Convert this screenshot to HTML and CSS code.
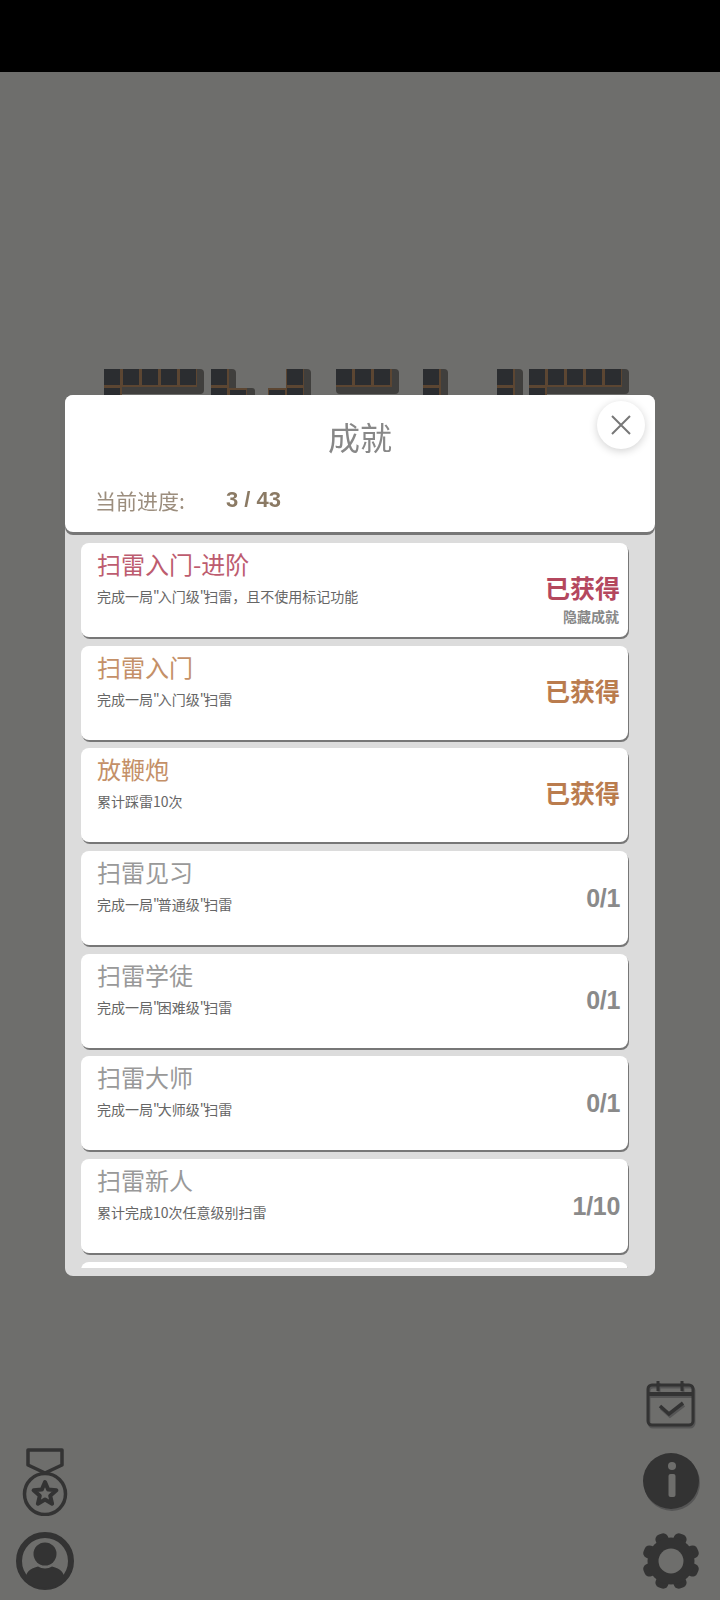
FILE: index.html
```html
<!DOCTYPE html>
<html lang="zh-CN">
<head>
    <meta charset="UTF-8">
    <meta name="viewport" content="width=device-width, initial-scale=1.0">
    <title>成就</title>
    <link rel="stylesheet" href="styles.css">
</head>
<body>
    <div class="page">
        <div class="top-bar"></div>

        <!-- game board behind the dialog, only its top edge shows -->
        <svg class="board" width="720" height="30" viewBox="0 0 720 30">
            <g fill="#403f3d">
                <rect x="104" y="1" width="100" height="25" rx="4"/>
                <rect x="211" y="1" width="25" height="29" rx="4"/>
                <rect x="211" y="20" width="44" height="10" rx="3"/>
                <rect x="286" y="1" width="25" height="29" rx="4"/>
                <rect x="268" y="20" width="43" height="10" rx="3"/>
                <rect x="336" y="1" width="63" height="25" rx="4"/>
                <rect x="423" y="1" width="25" height="29" rx="4"/>
                <rect x="497" y="1" width="26" height="29" rx="4"/>
                <rect x="529" y="1" width="100" height="25" rx="4"/>
            </g>
            <g fill="#5c4632">
                <rect x="104" y="1" width="93" height="18"/>
                <rect x="104" y="19" width="18" height="11"/>
                <rect x="211" y="1" width="18" height="29"/>
                <rect x="229" y="20" width="18" height="10"/>
                <rect x="286" y="1" width="18" height="29"/>
                <rect x="268" y="20" width="18" height="10"/>
                <rect x="336" y="1" width="56" height="18"/>
                <rect x="423" y="1" width="18" height="29"/>
                <rect x="497" y="1" width="18" height="29"/>
                <rect x="529" y="1" width="93" height="18"/>
                <rect x="529" y="19" width="18" height="11"/>
            </g>
            <g fill="#2b2d30">
                <rect x="104" y="1" width="16" height="16"/>
                <rect x="123" y="1" width="16" height="16"/>
                <rect x="142" y="1" width="16" height="16"/>
                <rect x="161" y="1" width="16" height="16"/>
                <rect x="180" y="1" width="16" height="16"/>
                <rect x="104" y="20" width="16" height="10"/>
                <rect x="211" y="1" width="16" height="16"/>
                <rect x="211" y="20" width="16" height="10"/>
                <rect x="230" y="22" width="16" height="8"/>
                <rect x="287" y="1" width="16" height="16"/>
                <rect x="287" y="20" width="16" height="10"/>
                <rect x="269" y="22" width="16" height="8"/>
                <rect x="336" y="1" width="16" height="16"/>
                <rect x="355" y="1" width="16" height="16"/>
                <rect x="374" y="1" width="16" height="16"/>
                <rect x="423" y="1" width="16" height="16"/>
                <rect x="423" y="20" width="16" height="10"/>
                <rect x="497" y="1" width="16" height="16"/>
                <rect x="497" y="20" width="16" height="10"/>
                <rect x="529" y="1" width="16" height="16"/>
                <rect x="548" y="1" width="16" height="16"/>
                <rect x="567" y="1" width="16" height="16"/>
                <rect x="586" y="1" width="16" height="16"/>
                <rect x="605" y="1" width="16" height="16"/>
                <rect x="529" y="20" width="16" height="10"/>
            </g>
        </svg>

        <div class="footer-icons">
            <div class="icon-col">
                <!-- medal -->
                <svg width="58" height="68" viewBox="0 0 58 68" fill="none" stroke="#333" stroke-width="3.5" stroke-linejoin="round">
                    <path d="M12 2H46V17L29 25L12 17Z"/>
                    <circle cx="29" cy="46" r="20.500"/>
                    <path d="M29 34L32.200 41.600L40.400 42.300L34.200 47.700L36.100 55.700L29 51.500L21.900 55.700L23.800 47.700L17.600 42.300L25.800 41.600Z" stroke-width="4"/>
                </svg>
                <!-- profile -->
                <svg width="58" height="58" viewBox="0 0 58 58">
                    <circle cx="29" cy="29" r="26" fill="none" stroke="#333" stroke-width="6"/>
                    <circle cx="29" cy="22" r="11.500" fill="#333"/>
                    <path d="M9 49C10 40 13 37 22 34.500C26 37 32 37 36 34.500C45 37 48 40 49 49C38 58 20 58 9 49Z" fill="#333"/>
                </svg>
            </div>
            <div class="icon-col icon-col-right">
                <!-- calendar -->
                <svg class="icon-shadow" width="58" height="50" viewBox="0 0 58 50" fill="none" stroke="#333" stroke-width="3">
                    <rect x="6" y="5" width="45" height="40" rx="4"/>
                    <path d="M6 14H51" stroke-width="4"/>
                    <path d="M16 1V11M40 1V11"/>
                    <path d="M18 26L27 34L41 23" stroke-width="3.500"/>
                </svg>
                <!-- info -->
                <svg class="icon-shadow" width="58" height="58" viewBox="0 0 58 58">
                    <circle cx="29" cy="29" r="28" fill="#333"/>
                    <circle cx="30" cy="14" r="4" fill="#6e6e6c"/>
                    <rect x="26.500" y="22" width="7" height="23" rx="2" fill="#6e6e6c"/>
                </svg>
                <!-- settings -->
                <svg width="58" height="58" viewBox="0 0 58 58" fill="#333">
                    <g>
                        <rect x="22.500" y="0" width="13" height="58" rx="5" transform="rotate(22.5 29 29)"/>
                        <rect x="22.500" y="0" width="13" height="58" rx="5" transform="rotate(67.5 29 29)"/>
                        <rect x="22.500" y="0" width="13" height="58" rx="5" transform="rotate(112.5 29 29)"/>
                        <rect x="22.500" y="0" width="13" height="58" rx="5" transform="rotate(157.5 29 29)"/>
                    </g>
                    <circle cx="29" cy="29" r="18" fill="none" stroke="#333" stroke-width="11"/>
                    <circle cx="29" cy="29" r="12.500" fill="#6e6e6c"/>
                </svg>
            </div>
        </div>

        <div class="dialog">
            <div class="dialog-head">
                <h1 class="dialog-title">成就</h1>
                <button class="close-btn">
                    <svg width="20" height="20" viewBox="0 0 20 20" stroke="#777" stroke-width="2" fill="none">
                        <path d="M1 1L19 19M19 1L1 19"/>
                    </svg>
                </button>
                <div class="progress">
                    <span class="progress-label">当前进度:</span>
                    <span class="progress-value">3 / 43</span>
                </div>
            </div>
            <div class="dialog-body">
                <div class="list">
                    <div class="card rose">
                        <div class="card-text">
                            <div class="card-title">扫雷入门-进阶</div>
                            <div class="card-desc">完成一局<span class="q">"</span>入门级<span class="q">"</span>扫雷，且不使用标记功能</div>
                        </div>
                        <div class="card-status">已获得</div>
                        <div class="card-hidden">隐藏成就</div>
                    </div>
                    <div class="card tan">
                        <div class="card-text">
                            <div class="card-title">扫雷入门</div>
                            <div class="card-desc">完成一局<span class="q">"</span>入门级<span class="q">"</span>扫雷</div>
                        </div>
                        <div class="card-status">已获得</div>
                    </div>
                    <div class="card tan">
                        <div class="card-text">
                            <div class="card-title">放鞭炮</div>
                            <div class="card-desc">累计踩雷10次</div>
                        </div>
                        <div class="card-status">已获得</div>
                    </div>
                    <div class="card">
                        <div class="card-text">
                            <div class="card-title">扫雷见习</div>
                            <div class="card-desc">完成一局<span class="q">"</span>普通级<span class="q">"</span>扫雷</div>
                        </div>
                        <div class="card-status">0/1</div>
                    </div>
                    <div class="card">
                        <div class="card-text">
                            <div class="card-title">扫雷学徒</div>
                            <div class="card-desc">完成一局<span class="q">"</span>困难级<span class="q">"</span>扫雷</div>
                        </div>
                        <div class="card-status">0/1</div>
                    </div>
                    <div class="card">
                        <div class="card-text">
                            <div class="card-title">扫雷大师</div>
                            <div class="card-desc">完成一局<span class="q">"</span>大师级<span class="q">"</span>扫雷</div>
                        </div>
                        <div class="card-status">0/1</div>
                    </div>
                    <div class="card">
                        <div class="card-text">
                            <div class="card-title">扫雷新人</div>
                            <div class="card-desc">累计完成10次任意级别扫雷</div>
                        </div>
                        <div class="card-status">1/10</div>
                    </div>
                    <div class="card"></div>
                </div>
            </div>
        </div>
    </div>
</body>
</html>
```

FILE: styles.css
```css
* {
    box-sizing: border-box;
}

body {
    margin: 0;
    background-color: #6e6e6c;
    font-family: "Noto Sans CJK SC", "Liberation Sans", sans-serif;
}

.page {
    position: relative;
    display: flex;
    flex-direction: column;
    height: 1600px;
    overflow: hidden;
    filter: blur(0.5px);
}

.top-bar {
    height: 72px;
    background-color: #000;
}

.board {
    display: block;
    margin-top: 296px;
}

.footer-icons {
    display: flex;
    justify-content: space-between;
    align-items: flex-end;
    margin-top: auto;
    padding: 0 20px 10px 16px;
}

.icon-col {
    display: flex;
    flex-direction: column;
    gap: 16px;
}

.icon-col-right {
    gap: 22px;
}

.icon-col svg {
    display: block;
}

.icon-shadow {
    filter: drop-shadow(1px 2px 0 #555);
}

/* Dialog */
.dialog {
    position: absolute;
    top: 395px;
    left: 65px;
    display: flex;
    flex-direction: column;
    width: 590px;
    height: 881px;
    border-radius: 8px;
    background-color: #dcdcdc;
}

.dialog-head {
    position: relative;
    z-index: 1;
    height: 137px;
    padding-top: 15px;
    border-radius: 8px;
    background-color: #fff;
    box-shadow: 0 3px 0 #777;
}

.dialog-title {
    margin: 0;
    color: #888;
    font-size: 32px;
    font-weight: 400;
    line-height: 52px;
    text-align: center;
}

.close-btn {
    position: absolute;
    top: 6px;
    right: 10px;
    display: flex;
    justify-content: center;
    align-items: center;
    width: 48px;
    height: 48px;
    padding: 0;
    border: 0;
    border-radius: 50%;
    background-color: #fff;
    box-shadow: 0 2px 8px rgba(0, 0, 0, 0.18);
}

.progress {
    display: flex;
    align-items: center;
    margin-top: 23px;
    padding-left: 30px;
    line-height: 30px;
}

.progress-label {
    width: 131px;
    color: #9c8e7e;
    font-size: 21px;
}

.progress-value {
    color: #8b7a64;
    font-family: "Liberation Sans", sans-serif;
    font-size: 22px;
    font-weight: 700;
}

.dialog-body {
    flex: 1;
    min-height: 0;
    padding: 11px 0 8px;
}

.list {
    display: flex;
    flex-direction: column;
    gap: 8.7px;
    height: 100%;
    padding: 0 27px 0 16px;
    overflow: hidden;
}

/* Achievement cards */
.card {
    position: relative;
    display: flex;
    flex-shrink: 0;
    justify-content: space-between;
    align-items: center;
    height: 94px;
    padding: 0 8px 0 16px;
    border-radius: 8px;
    background-color: #fff;
    box-shadow: 1px 2px 0 #777;
}

.card-text {
    align-self: flex-start;
    padding-top: 4px;
}

.card-title {
    color: #999;
    font-size: 24px;
    line-height: 34px;
}

.card-desc {
    margin-top: 5px;
    color: #666;
    font-size: 14px;
    line-height: 20px;
}

/* the quotes are narrower in the original font */
.q {
    letter-spacing: -2px;
}

.card-status {
    color: #8a8a8a;
    font-family: "Liberation Sans", "Noto Sans CJK SC", sans-serif;
    font-size: 25px;
    font-weight: 700;
    letter-spacing: -0.3px;
}

.card-hidden {
    position: absolute;
    right: 9px;
    bottom: 11px;
    color: #888;
    font-size: 14px;
    font-weight: 700;
    line-height: 20px;
}

.rose .card-status,
.tan .card-status {
    margin-bottom: 6px;
    letter-spacing: 0;
}

.rose .card-status {
    color: #b4475e;
}

.rose .card-title {
    color: #bd5c6f;
}

.tan .card-title {
    color: #c49068;
}

.tan .card-status {
    color: #ba7c4e;
}
```
